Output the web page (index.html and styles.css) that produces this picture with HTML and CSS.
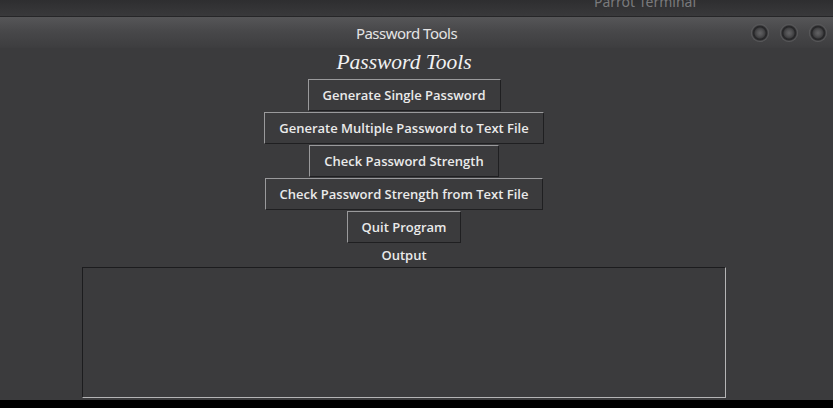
FILE: index.html
```html
<!DOCTYPE html>
<html lang="en">
<head>
<meta charset="utf-8">
<title>Password Tools</title>
<link rel="stylesheet" href="styles.css">
</head>
<body>
<div class="topbar"><span class="topbar-title">Parrot Terminal</span></div>
<div class="window">
  <div class="titlebar">
    <div class="tb-side"></div>
    <div class="tb-title">Password Tools</div>
    <div class="tb-side tb-buttons">
      <span class="wbtn"></span><span class="wbtn"></span><span class="wbtn"></span>
    </div>
  </div>
  <div class="content">
    <h1 class="heading">Password Tools</h1>
    <button class="btn">Generate Single Password</button>
    <button class="btn">Generate Multiple Password to Text File</button>
    <button class="btn">Check Password Strength</button>
    <button class="btn">Check Password Strength from Text File</button>
    <button class="btn">Quit Program</button>
    <div class="label">Output</div>
    <div class="output"></div>
  </div>
</div>
<div class="bottom"></div>
</body>
</html>
```
FILE: styles.css
```css
html, body {
  margin: 0;
  padding: 0;
  background: #000;
  width: 833px;
  height: 408px;
  overflow: hidden;
}
body {
  font-family: "Noto Sans", "Open Sans", sans-serif;
}
.topbar {
  height: 16px;
  background: linear-gradient(#2e2e30, #39393b);
  border-bottom: 1px solid #262628;
  overflow: hidden;
  display: flex;
}
.topbar-title {
  margin-left: 594px;
  margin-top: -7px;
  font-size: 14px;
  line-height: 18px;
  color: #7a7a7c;
}
.window {
  height: 383px;
  background: #3b3b3d;
  display: flex;
  flex-direction: column;
}
.titlebar {
  height: 31px;
  background: linear-gradient(#565658 0%, #48484a 45%, #3d3d3f 100%);
  display: grid;
  grid-template-columns: 1fr auto 1fr;
  align-items: center;
  padding-right: 20px;
}
.tb-title {
  font-size: 15px;
  color: #e4e4e4;
  letter-spacing: -0.5px;
  padding-top: 1px;
}
.tb-buttons {
  display: flex;
  justify-content: flex-end;
  gap: 11px;
  margin-right: -14px;
  padding-top: 1px;
}
.wbtn {
  width: 18px;
  height: 18px;
  border-radius: 50%;
  background: radial-gradient(circle at 50% 50%, #626264 0, #505052 3px, #3e3e40 5px, #262628 6px, #2a2a2c 7px, #4e4e50 8px, #606062 9px);
}
.content {
  width: 808px;
  display: flex;
  flex-direction: column;
  align-items: center;
}
.heading {
  margin: 2px 0 4px;
  font-family: "Liberation Serif", serif;
  font-style: italic;
  font-weight: normal;
  font-size: 21.5px;
  line-height: 25px;
  color: #f2f2f2;
}
.btn {
  font-family: "Open Sans", "Noto Sans", sans-serif;
  font-size: 13px;
  font-weight: 550;
  color: #eaeaea;
  background: #3b3b3d;
  border: 1px solid;
  border-color: #9a9a9c #1f1f21 #1f1f21 #9a9a9c;
  height: 32px;
  padding: 0 14px;
  margin-bottom: 1px;
  line-height: 18px;
}
.label {
  font-family: "Open Sans", "Noto Sans", sans-serif;
  font-size: 13px;
  font-weight: 550;
  line-height: 18px;
  color: #eaeaea;
  margin-top: 2px;
  margin-bottom: 3px;
}
.output {
  width: 642px;
  height: 129px;
  border: 1px solid;
  border-color: #1c1c1e #b4b4b6 #b4b4b6 #1c1c1e;
  background: #3b3b3d;
}
.bottom {
  height: 9px;
  background: #000;
}
```
